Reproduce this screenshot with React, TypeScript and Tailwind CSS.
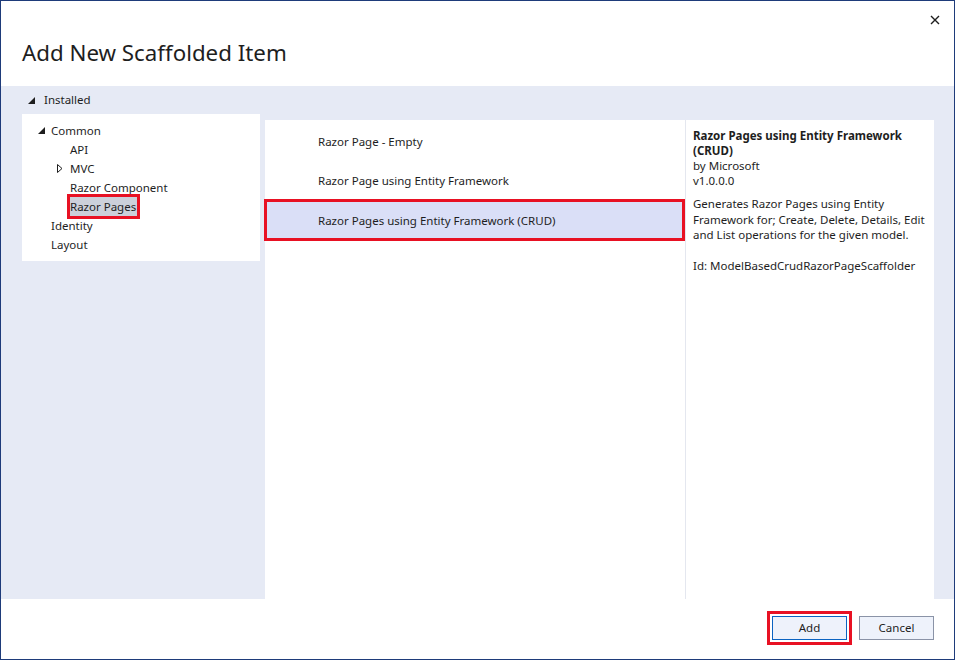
import React from 'react';

const font = "font-['Segoe_UI','Noto_Sans',sans-serif]";

const Expanded: React.FC = () => (
  <svg width="7" height="7" viewBox="0 0 7 7" className="shrink-0">
    <polygon points="0,7 7,7 7,0" fill="#1e1e1e" />
  </svg>
);

const Collapsed: React.FC = () => (
  <svg width="6" height="9" viewBox="0 0 6 9" className="shrink-0">
    <polygon points="0.5,0.5 5,4.5 0.5,8.5" fill="none" stroke="#1e1e1e" strokeWidth="1" />
  </svg>
);

const templates = ['Razor Page - Empty', 'Razor Page using Entity Framework'];

const App: React.FC = () => {
  return (
    <div className={`w-[955px] h-[660px] border border-[#1e3b7a] bg-white flex flex-col text-[11.5px] text-[#1e1e1e] ${font}`}>
      {/* header */}
      <div className="h-[85px] relative shrink-0">
        <h1 className="pl-[21px] pt-[36px] text-[22.3px] leading-[32px] font-normal text-[#1e1e1e]">
          Add New Scaffolded Item
        </h1>
        <button className="absolute right-[14px] top-[14px] w-[10px] h-[10px]">
          <svg width="10" height="10" viewBox="0 0 10 10">
            <path d="M1 1 L9 9 M9 1 L1 9" stroke="#1e1e1e" strokeWidth="1.4" />
          </svg>
        </button>
      </div>

      {/* body */}
      <div className="flex-1 bg-[#e6eaf5] flex pl-[21px] pr-[20px]">
        <div className="w-[238px] shrink-0 flex flex-col">
          <div className="h-[28px] flex items-center pl-[6px] gap-[9px]">
            <Expanded />
            <span>Installed</span>
          </div>
          <div className="bg-white py-[7px]">
            <div className="h-[19px] flex items-center pl-[16px] gap-[6px]">
              <Expanded />
              <span>Common</span>
            </div>
            <div className="h-[19px] flex items-center pl-[48px]">API</div>
            <div className="h-[19px] flex items-center pl-[35px] gap-[7px]">
              <Collapsed />
              <span>MVC</span>
            </div>
            <div className="h-[19px] flex items-center pl-[48px]">Razor Component</div>
            <div className="h-[19px] flex items-center pl-[45px]">
              <span className="h-[25px] flex items-center border-[3px] border-[#e81123] bg-[#ccd0da] pr-[1px]">
                Razor Pages
              </span>
            </div>
            <div className="h-[19px] flex items-center pl-[29px]">Identity</div>
            <div className="h-[19px] flex items-center pl-[29px]">Layout</div>
          </div>
        </div>

        <div className="flex-1 flex mt-[34px] ml-[5px]">
          <div className="flex-1 bg-white pt-[2px]">
            <div className="h-[40px] flex items-center pl-[53px]">{templates[0]}</div>
            <div className="h-[37px] flex items-center pl-[53px] pt-[1px]">{templates[1]}</div>
            <div className="h-[42px] -ml-[1px] flex items-center pl-[51px] pt-[1px] border-[3px] border-[#e81123] bg-[#dadff7]">
              Razor Pages using Entity Framework (CRUD)
            </div>
          </div>
          <div className="w-[249px] shrink-0 bg-white border-l border-[#e4e7ef] pl-[7px] pt-[8px] leading-[15px] whitespace-nowrap">
            <div className="font-bold">
              Razor Pages using Entity Framework
              <br />
              (CRUD)
            </div>
            <div>by Microsoft</div>
            <div>v1.0.0.0</div>
            <div className="mt-[8px] leading-[15.5px]">
              Generates Razor Pages using Entity
              <br />
              Framework for; Create, Delete, Details, Edit
              <br />
              and List operations for the given model.
            </div>
            <div className="mt-[15px]">Id: ModelBasedCrudRazorPageScaffolder</div>
          </div>
        </div>
      </div>

      {/* footer */}
      <div className="h-[60px] shrink-0 flex items-center justify-end gap-[12px] pr-[20px] pb-[2px]">
        <button className="w-[75px] h-[24px] bg-[#eef2fb] border border-[#0b63c1] outline-[3px] outline-solid outline-[#e81123] outline-offset-2">
          Add
        </button>
        <button className="w-[75px] h-[24px] bg-[#eef2fb] border border-[#8a93a7]">
          Cancel
        </button>
      </div>
    </div>
  );
};

export default App;
